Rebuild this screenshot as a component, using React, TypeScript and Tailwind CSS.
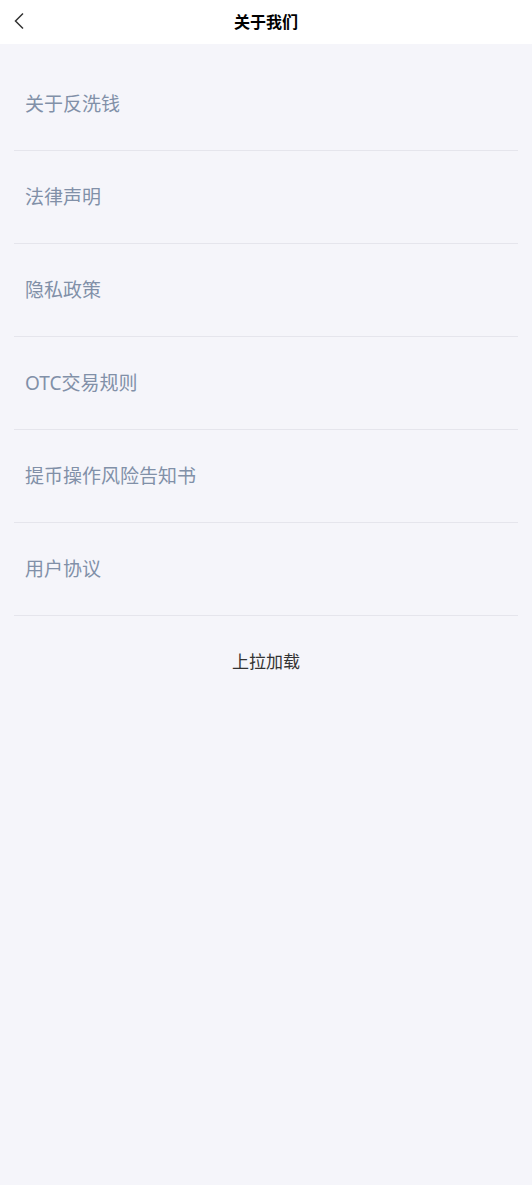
import React from "react";

const items = [
  "关于反洗钱",
  "法律声明",
  "隐私政策",
  "OTC交易规则",
  "提币操作风险告知书",
  "用户协议",
];

export default function App() {
  return (
    <main
      className="min-h-[1185px] w-full bg-[#f5f5fa]"
      style={{ fontFamily: '"Noto Sans", "Noto Sans CJK SC", sans-serif' }}
    >
      <header className="relative flex h-[44px] items-center justify-center bg-white">
        <button className="absolute left-[12px] top-[11px] flex h-[20px] w-[14px] items-center justify-center">
          <svg width="12" height="18" viewBox="0 0 12 18" fill="none">
            <path d="M10 1.5L2.5 9l7.5 7.5" stroke="#333" strokeWidth="1.5" />
          </svg>
        </button>
        <h1 className="text-[16px] font-bold text-black">关于我们</h1>
      </header>

      <ul className="mt-[14px] px-[14px]">
        {items.map((t) => (
          <li
            key={t}
            className="flex h-[93px] items-center border-b border-[#e5e5ec] pl-[11px] text-[19px] text-[#8190a8]"
          >
            {t}
          </li>
        ))}
      </ul>

      <p className="mt-[33px] text-center text-[17px] text-[#333]">上拉加载</p>
    </main>
  );
}
